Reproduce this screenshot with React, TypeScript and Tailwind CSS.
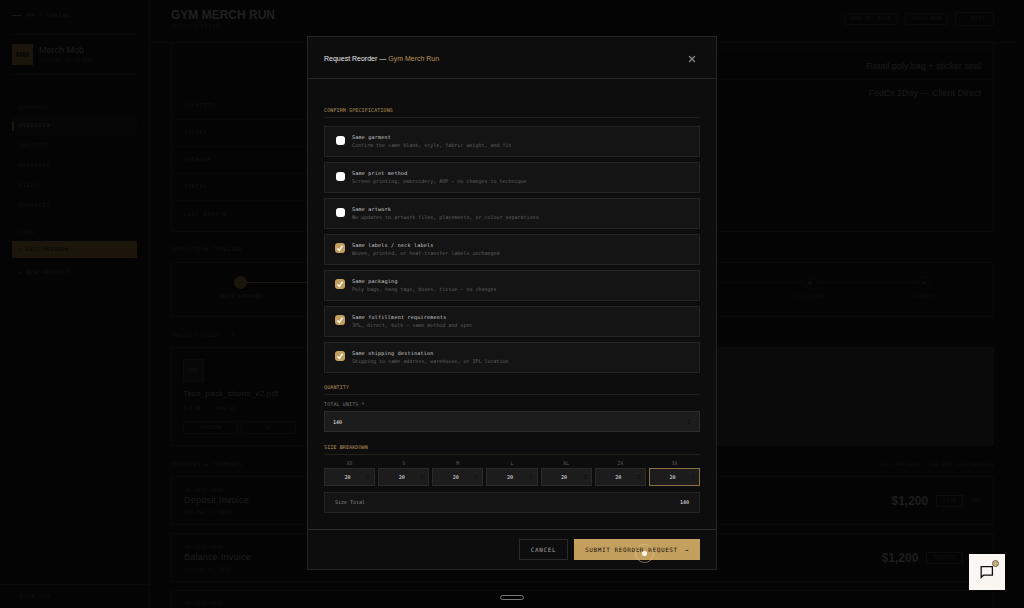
import React from 'react';
import { Check, ChevronsUpDown, X } from 'lucide-react';
import clsx from 'clsx';

const navItems = ['OVERVIEW', 'PROJECTS', 'REORDERS', 'FILES', 'INVOICES'];

const detailRows = ['QUANTITY', 'STYLES', 'ARTWORK', 'STATUS', 'LAST UPDATE'];

const timeline = [
  { label: 'QUOTE APPROVED', done: true },
  { label: 'DEPOSIT PAID', done: true },
  { label: 'ARTWORK', done: true },
  { label: 'SAMPLING', done: true },
  { label: 'PRODUCTION', done: false },
  { label: 'FULFILLMENT', done: false },
  { label: 'SHIPPED', done: false },
];

const invoices = [
  { id: 'QB-2026-0298', name: 'Deposit Invoice', due: 'Due Mar 5, 2026', amount: '$1,200', status: 'PAID' },
  { id: 'QB-2026-0330', name: 'Balance Invoice', due: 'Due Apr 8, 2026', amount: '$1,200', status: 'PENDING' },
];

const specs = [
  { id: 'garment', title: 'Same garment', note: 'Confirm the same blank, style, fabric weight, and fit', checked: false },
  { id: 'print', title: 'Same print method', note: 'Screen printing, embroidery, AOP — no changes to technique', checked: false },
  { id: 'artwork', title: 'Same artwork', note: 'No updates to artwork files, placements, or colour separations', checked: false },
  { id: 'labels', title: 'Same labels / neck labels', note: 'Woven, printed, or heat-transfer labels unchanged', checked: true },
  { id: 'packaging', title: 'Same packaging', note: 'Poly bags, hang tags, boxes, tissue — no changes', checked: true },
  { id: 'fulfillment', title: 'Same fulfillment requirements', note: '3PL, direct, bulk — same method and spec', checked: true },
  { id: 'shipping', title: 'Same shipping destination', note: 'Shipping to same address, warehouse, or 3PL location', checked: true },
];

const sizes = ['XS', 'S', 'M', 'L', 'XL', '2X', '3X'];

const Sidebar = () => (
  <aside className="w-[150px] shrink-0 border-r border-[#090909] flex flex-col">
    <div className="px-3 flex-1">
      <div className="h-[35px] pb-1 flex items-center gap-[5px] border-b border-[#090909]">
        <span className="w-[10px] h-px bg-[#1c160b]" />
        <span className="text-[5px] leading-[8px] tracking-[0.18em] text-[#171717]">MM / PORTAL</span>
      </div>
      <div className="h-10 flex items-center gap-[6px] border-b border-[#090909]">
        <span className="size-[21px] bg-[#1c150c] flex items-center justify-center font-['Liberation_Sans',sans-serif] text-[8px] font-bold text-[#050505]">MM</span>
        <div>
          <p className="font-['Liberation_Sans',sans-serif] text-[9px] leading-[11px] text-[#1e1e1e]">Merch Mob</p>
          <p className="text-[5px] leading-[8px] tracking-wider text-[#111111]">VIEWING AS CLIENT</p>
        </div>
      </div>

      <p className="mt-7 mb-1 h-[10px] pl-[7px] flex items-center text-[5px] tracking-wide text-[#0d0d0d]">WORKSPACE</p>
      <nav className="flex flex-col gap-[2px]">
        {navItems.map((item, i) => (
          <a
            key={item}
            href="#"
            className={clsx(
              'h-[18px] flex items-center gap-[5px] text-[5px] tracking-[0.18em]',
              i === 0 ? 'bg-[#060606] text-[#1e1e1e]' : 'text-[#121212]'
            )}
          >
            <span className={clsx('w-[2px] h-[10px]', i === 0 && 'bg-[#1c150c]')} />
            {item}
          </a>
        ))}
      </nav>

      <p className="mt-[13px] mb-[3px] h-[10px] pl-[7px] flex items-center text-[5px] tracking-wide text-[#0d0d0d]">ADMIN</p>
      <button className="w-full h-[17px] px-[7px] flex items-center bg-[#1c150c] text-[5px] tracking-widest text-[#050505]">← EXIT PREVIEW</button>
      <button className="mt-[6px] w-full h-[18px] px-[7px] flex items-center text-[5px] tracking-[0.18em] text-[#17140e]">+ NEW PROJECT</button>
    </div>
    <div className="h-6 px-3 flex items-center border-t border-[#090909]">
      <a href="#" className="text-[5px] tracking-[0.18em] text-[#111111]">← SIGN OUT</a>
    </div>
  </aside>
);

const SectionLabel = ({ children }) => (
  <h2 className="text-[5px] leading-[8px] tracking-[0.15em] text-[#121212]">{children}</h2>
);

const ProjectPage = () => (
  <main className="flex-1 min-w-0 mr-2 flex flex-col">
    <header className="h-[43px] shrink-0 pl-[21px] pr-[22px] pb-1 flex items-center justify-between border-b border-[#090909]">
      <div>
        <h1 className="font-['Liberation_Sans',sans-serif] text-xs leading-[14px] font-bold text-[#202020]">GYM MERCH RUN</h1>
        <p className="text-[5px] leading-[8px] tracking-[0.15em] text-[#101010]">PROJECT DETAIL</p>
      </div>
      <div className="flex items-center gap-[7px] text-[5px] tracking-wider text-[#121212]">
        <span className="h-3 px-[6px] flex items-center border border-[#090909]">MAR 29, 2026</span>
        <span className="h-3 px-[6px] flex items-center border border-[#090909]">MERCH MOB</span>
        <button className="h-[14px] px-2 flex items-center border border-[#0a0a0a] tracking-widest">← EXIT</button>
      </div>
    </header>

    <div className="flex-1 min-h-0 overflow-hidden pl-[21px] pr-[22px]">
      <section className="h-[189px] grid grid-cols-2 border border-t-0 border-[#090909]">
        <div className="pt-[50px]">
          {detailRows.map(row => (
            <p key={row} className="h-[27px] px-3 flex items-center border-b border-[#080808] last:border-b-0 text-[5px] tracking-[0.18em] text-[#131313]">{row}</p>
          ))}
        </div>
        <div className="pt-[6px] font-['Liberation_Sans',sans-serif] text-[9px] text-[#1a1a1a]">
          <p className="h-[31px] px-3 pt-1 flex items-center justify-end border-y border-[#080808]">Retail poly bag + sticker seal</p>
          <p className="h-[27px] px-3 flex items-center justify-end">FedEx 2Day — Client Direct</p>
        </div>
      </section>

      <div className="mt-[13px] mb-[9px]">
        <SectionLabel>PRODUCTION TIMELINE</SectionLabel>
      </div>
      <section className="h-[55px] px-3 pt-[13px] grid grid-cols-7 border border-[#090909]">
        {timeline.map((step, i) => (
          <div key={step.label} className="flex flex-col gap-[3px]">
            <div className="flex items-center">
              <span className={clsx('flex-1 h-px', i > 0 && (step.done ? 'bg-[#1c150c]' : 'bg-[#080808]'))} />
              {step.done ? (
                <span className="size-[13px] rounded-full bg-[#1c150c] flex items-center justify-center text-[#050505]"><Check size={5} /></span>
              ) : (
                <span className="size-[13px] rounded-full border border-[#0a0a0a] flex items-center justify-center">
                  <span className="size-1 rounded-full bg-[#0d0d0d]" />
                </span>
              )}
              <span className={clsx('flex-1 h-px', i < 6 && (step.done ? 'bg-[#1c150c]' : 'bg-[#080808]'))} />
            </div>
            <p className={clsx('text-center text-[5px] leading-[8px]', step.done ? 'text-[#151515]' : 'text-[#0d0d0d]')}>{step.label}</p>
          </div>
        ))}
      </section>

      <div className="mt-[14px] mb-2">
        <SectionLabel>PROJECT FILES · 3</SectionLabel>
      </div>
      <section className="h-[99px] grid grid-cols-6 bg-[#0a0a0a]">
        <article className="p-[11px] bg-[#040404] border border-[#090909]">
          <span className="w-[21px] h-[23px] flex items-center justify-center bg-[#070707] border border-[#0a0a0a] text-[5px] text-[#151515]">PDF</span>
          <h3 className="mt-[6px] font-['Liberation_Sans',sans-serif] text-[8px] leading-3 tracking-wide text-[#1c1c1c]">Tech_pack_shorts_v2.pdf</h3>
          <p className="mt-1 flex gap-4 text-[5px] leading-[8px] text-[#101010]">
            <span>2.8 MB</span>
            <span>MAR 18</span>
          </p>
          <div className="mt-[9px] grid grid-cols-2 gap-[3px] text-[5px] text-[#121212]">
            <button className="h-[13px] border border-[#090909]">PREVIEW</button>
            <button className="h-[13px] border border-[#090909]">DL</button>
          </div>
        </article>
      </section>

      <div className="mt-[14px] mb-2 flex justify-between">
        <SectionLabel>INVOICES &amp; PAYMENTS</SectionLabel>
        <p className="text-[5px] leading-[8px] tracking-widest text-[#111111]">$1,200 paid · $1,480 outstanding</p>
      </div>
      <div className="flex flex-col gap-2">
        {invoices.map(inv => (
          <article key={inv.id} className="h-[49px] shrink-0 px-3 flex items-center gap-2 border border-[#090909]">
            <div className="flex-1">
              <p className="text-[5px] leading-[8px] tracking-wider text-[#101010]">{inv.id}</p>
              <h3 className="font-['Liberation_Sans',sans-serif] text-[9px] leading-[13px] tracking-wide text-[#1e1e1e]">{inv.name}</h3>
              <p className="mt-px text-[5px] leading-[8px] tracking-wide text-[#101010]">{inv.due}</p>
            </div>
            <span className="font-['Liberation_Sans',sans-serif] text-xs font-bold text-[#1e1e1e]">{inv.amount}</span>
            <span className="h-3 px-[6px] flex items-center border border-[#0c0c0c] text-[5px] tracking-wider text-[#121212]">{inv.status}</span>
            <a href="#" className="text-[5px] tracking-wider text-[#111111]">PDF</a>
          </article>
        ))}
        <article className="h-[49px] shrink-0 px-3 pt-2 border border-[#090909]">
          <p className="text-[5px] leading-[8px] tracking-wider text-[#101010]">QB-2026-0402</p>
        </article>
      </div>
    </div>
  </main>
);

const GoldHeading = ({ children }) => (
  <h3 className="pb-[3px] border-b border-[#23201a] text-[5px] leading-[8px] tracking-wide text-[#b8945a]">{children}</h3>
);

const SpecRow = ({ spec }) => (
  <label htmlFor={spec.id} className="h-[31px] px-[10px] pt-[6px] flex items-start gap-[7px] bg-[#141414] border border-[#242424]">
    <span className="relative mt-[2px] size-[10px] flex items-center justify-center">
      <input
        id={spec.id}
        type="checkbox"
        defaultChecked={spec.checked}
        className="peer appearance-none size-[9px] rounded-[3px] bg-white checked:size-[10px] checked:bg-[#c4a05f]"
      />
      <svg viewBox="0 0 10 10" className="absolute inset-0 hidden peer-checked:block pointer-events-none" fill="none" stroke="white" strokeWidth="1.4">
        <path d="M2.4 5.4L4.3 7.3L7.5 2.6" />
      </svg>
    </span>
    <span>
      <span className="block text-[5px] leading-[8px] tracking-wider text-[#d0d0d0]">{spec.title}</span>
      <span className="block text-[5px] leading-[8px] text-[#606060]">{spec.note}</span>
    </span>
  </label>
);

const ReorderModal = () => (
  <div role="dialog" aria-labelledby="reorder-title" className="w-[410px] bg-[#0d0d0d] border border-[#242424]">
    <div className="h-[42px] px-4 pt-[2px] flex items-center justify-between border-b border-[#242424]">
      <h2 id="reorder-title" className="font-['Liberation_Sans',sans-serif] text-[7px] leading-[10px] text-[#e8e8e8]">
        Request Reorder — <span className="text-[#b8945a]">Gym Merch Run</span>
      </h2>
      <button aria-label="Close" className="size-4 flex items-center justify-center text-[#8a8a8a]">
        <X size={10} strokeWidth={3} />
      </button>
    </div>

    <div className="px-4 pt-[27px] pb-4">
      <GoldHeading>CONFIRM SPECIFICATIONS</GoldHeading>
      <div className="mt-2 mb-[10px] flex flex-col gap-[5px]">
        {specs.map(spec => (
          <SpecRow key={spec.id} spec={spec} />
        ))}
      </div>

      <GoldHeading>QUANTITY</GoldHeading>
      <label htmlFor="total-units" className="mt-[5px] mb-[3px] block text-[5px] leading-[8px] tracking-wide text-[#6f6f6f]">TOTAL UNITS *</label>
      <div className="relative mb-[11px]">
        <input id="total-units" defaultValue="140" inputMode="numeric" className="block w-full h-[21px] px-2 bg-[#1c1c1c] border border-[#2c2c2c] text-[5px] text-[#f0f0f0] outline-none" />
        <ChevronsUpDown size={6} className="absolute right-2 top-2 text-[#050505]" />
      </div>

      <GoldHeading>SIZE BREAKDOWN</GoldHeading>
      <div className="mt-1 grid grid-cols-7 gap-[3px]">
        {sizes.map(size => (
          <div key={size} className="relative">
            <label htmlFor={`size-${size}`} className="mb-px block text-center text-[5px] leading-[8px] text-[#5c5c5c]">{size}</label>
            <input
              id={`size-${size}`}
              defaultValue="20"
              inputMode="numeric"
              className={clsx(
                'block w-full h-[18px] pr-1 text-center bg-[#1c1c1c] border text-[5px] text-[#f0f0f0] outline-none',
                size === '3X' ? 'border-[#8a7045]' : 'border-[#2a2a2a]'
              )}
            />
            <ChevronsUpDown size={6} className="absolute right-1 bottom-[6px] text-[#050505]" />
          </div>
        ))}
      </div>
      <div className="mt-[6px] h-[21px] px-[10px] flex items-center justify-between bg-[#141414] border border-[#242424] text-[5px]">
        <span className="text-[#8a8a8a]">Size Total</span>
        <span className="text-[#f0f0f0]">140</span>
      </div>
    </div>

    <div className="px-4 py-[9px] flex justify-end gap-[6px] border-t border-[#2e2e2e] text-[6px] tracking-widest">
      <button className="h-[21px] px-[11px] border border-[#2a2a2a] text-[#a0a0a0]">CANCEL</button>
      <button className="h-[21px] px-[11px] flex items-center gap-[7px] bg-[#c4a05f] text-[#17120a]">
        <span>SUBMIT REORDER REQUEST</span>
        <span>→</span>
      </button>
    </div>
  </div>
);

export default function App() {
  return (
    <div className="relative h-screen overflow-hidden bg-[#040404] font-['DejaVu_Sans_Mono',monospace]">
      <div className="h-full flex">
        <Sidebar />
        <ProjectPage />
      </div>

      <div className="absolute inset-0 pb-0.5 flex items-center justify-center">
        <ReorderModal />
      </div>

      {/* pointer */}
      <div className="absolute left-[635px] top-[544px] size-[19px] rounded-full border border-[#e3cda0]/50 flex items-center justify-center pointer-events-none">
        <span className="size-[5px] rounded-full bg-[#fff8ea]" />
      </div>

      <div className="absolute bottom-2 left-1/2 -translate-x-1/2 w-6 h-[5px] rounded-full border border-[#777777] bg-black" />

      <button aria-label="Open chat" className="absolute right-[19px] bottom-[18px] size-9 flex items-center justify-center bg-[#faf6f1] text-[#111111]">
        <svg width="14" height="14" viewBox="0 0 14 14" fill="none" stroke="currentColor" strokeWidth="1.3">
          <path d="M1.2 12.4V1.6H12.4V10.2H3.4L1.2 12.4Z" />
        </svg>
        <span className="absolute right-[6px] top-[6px] size-[7px] rounded-full bg-[#cfae74] border border-[#6b6963]" />
      </button>
    </div>
  );
}
